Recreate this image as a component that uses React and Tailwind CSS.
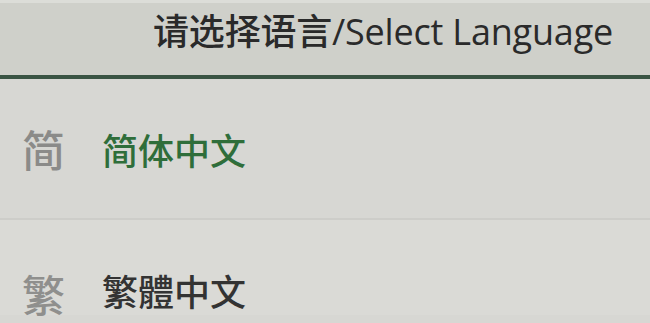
import React from "react";

function Row({ badge, label, labelClass, badgeClass, rowClass }) {
  return (
    <div className={`flex pl-[22px] ${rowClass}`}>
      <span className={`text-[43px] leading-none w-[80px] font-medium font-['Noto_Sans_CJK_TC','Noto_Sans_CJK_SC',sans-serif] ${badgeClass}`}>
        {badge}
      </span>
      <span className={`text-[36px] leading-none font-medium font-['Noto_Sans_CJK_TC','Noto_Sans_CJK_SC',sans-serif] ${labelClass}`}>
        {label}
      </span>
    </div>
  );
}

export default function App() {
  return (
    <div className="w-[650px] h-[323px] overflow-hidden bg-[#d7d7d3] font-['Open_Sans','Noto_Sans_CJK_SC',sans-serif]">
      <div className="h-[75px] bg-[#cfd0ca] border-t-[3px] border-[#dcddd8] flex items-start justify-end pr-[37px] pt-[11px]">
        <span className="text-[36px] leading-none font-medium text-[#2a2a2a] tracking-[-0.2px]">
          请选择语言/Select Language
        </span>
      </div>
      <div className="h-[4px] bg-[#3a5443]" />
      <Row
        badge="简"
        label="简体中文"
        badgeClass="text-[#8b8b89]"
        labelClass="text-[#2f6e3a]"
        rowClass="h-[141px] items-center border-b-2 border-[#cdcdc9]"
      />
      <Row
        badge="繁"
        label="繁體中文"
        badgeClass="text-[#8f8f8d]"
        labelClass="text-[#333333]"
        rowClass="bg-[#dadad6] items-start pt-[52px]"
      />
    </div>
  );
}
